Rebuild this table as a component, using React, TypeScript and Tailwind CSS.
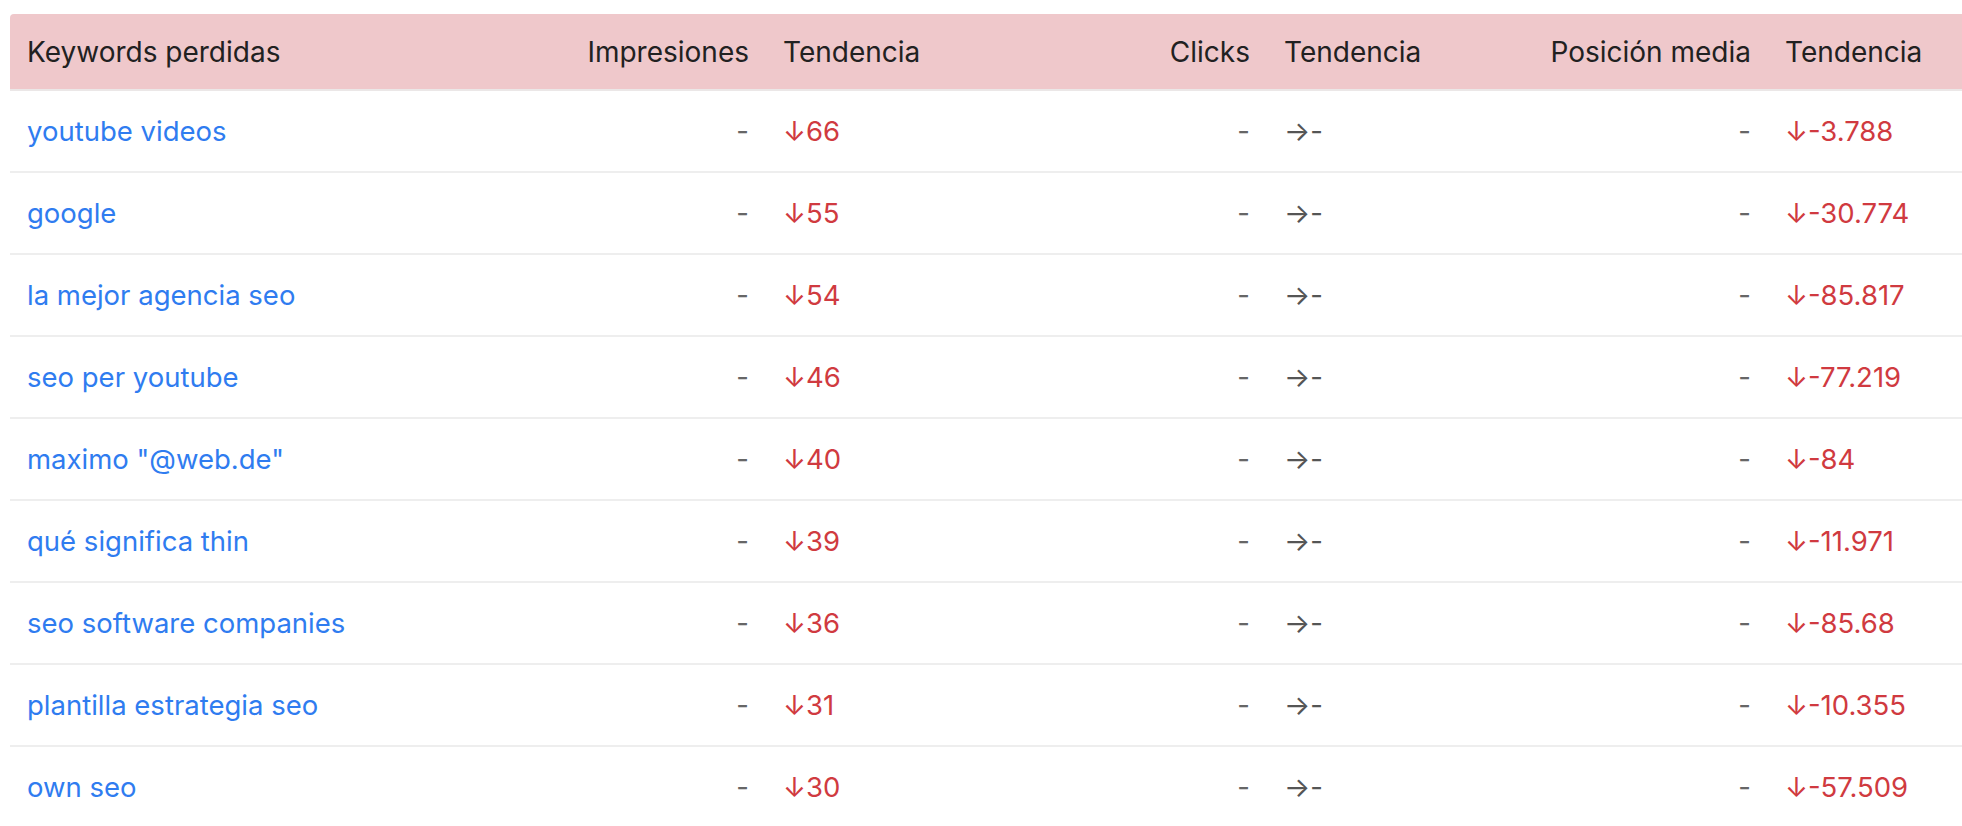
const rows = [
  { keyword: "youtube videos", impresiones: "66", posicion: "-3.788" },
  { keyword: "google", impresiones: "55", posicion: "-30.774" },
  { keyword: "la mejor agencia seo", impresiones: "54", posicion: "-85.817" },
  { keyword: "seo per youtube", impresiones: "46", posicion: "-77.219" },
  { keyword: 'maximo "@web.de"', impresiones: "40", posicion: "-84" },
  { keyword: "qué significa thin", impresiones: "39", posicion: "-11.971" },
  { keyword: "seo software companies", impresiones: "36", posicion: "-85.68" },
  { keyword: "plantilla estrategia seo", impresiones: "31", posicion: "-10.355" },
  { keyword: "own seo", impresiones: "30", posicion: "-57.509" },
];

const App = () => {
  return (
    <div className="min-h-screen bg-white pt-[14px] pl-[10px] font-['Inter',sans-serif] text-[28px]">
      <table className="w-full table-fixed border-collapse">
        <colgroup>
          <col className="w-[380px]" />
          <col className="w-[376px]" />
          <col className="w-[250px]" />
          <col className="w-[251px]" />
          <col className="w-[250px]" />
          <col className="w-[251px]" />
          <col />
        </colgroup>
        <thead>
          <tr className="h-[76px] bg-[#efc8cb] text-[#212121] border-b-2 border-[#ebe7e7]">
            <th className="px-[17px] text-left font-normal rounded-tl-[4px]">Keywords perdidas</th>
            <th className="px-[17px] text-right font-normal">Impresiones</th>
            <th className="px-[17px] text-left font-normal">Tendencia</th>
            <th className="px-[17px] text-right font-normal">Clicks</th>
            <th className="px-[17px] text-left font-normal">Tendencia</th>
            <th className="px-[17px] text-right font-normal">Posición media</th>
            <th className="px-[17px] text-left font-normal">Tendencia</th>
          </tr>
        </thead>
        <tbody className="text-[27.5px]">
          {rows.map((row) => (
            <tr key={row.keyword} className="h-[82px] border-b-2 border-[#eeeeee]">
              <td className="px-[17px] pt-[2px] text-left">
                <a href="#" className="text-[#2f7cf0]">
                  {row.keyword}
                </a>
              </td>
              <td className="px-[17px] pt-[2px] text-right text-[#666666]">-</td>
              <td className="px-[17px] pt-[2px] text-left text-[#d03a40]">↓{row.impresiones}</td>
              <td className="px-[17px] pt-[2px] text-right text-[#666666]">-</td>
              <td className="px-[17px] pt-[2px] text-left text-[#555555]">→-</td>
              <td className="px-[17px] pt-[2px] text-right text-[#666666]">-</td>
              <td className="px-[17px] pt-[2px] text-left text-[#d03a40]">↓{row.posicion}</td>
            </tr>
          ))}
        </tbody>
      </table>
    </div>
  );
};

export default App;
